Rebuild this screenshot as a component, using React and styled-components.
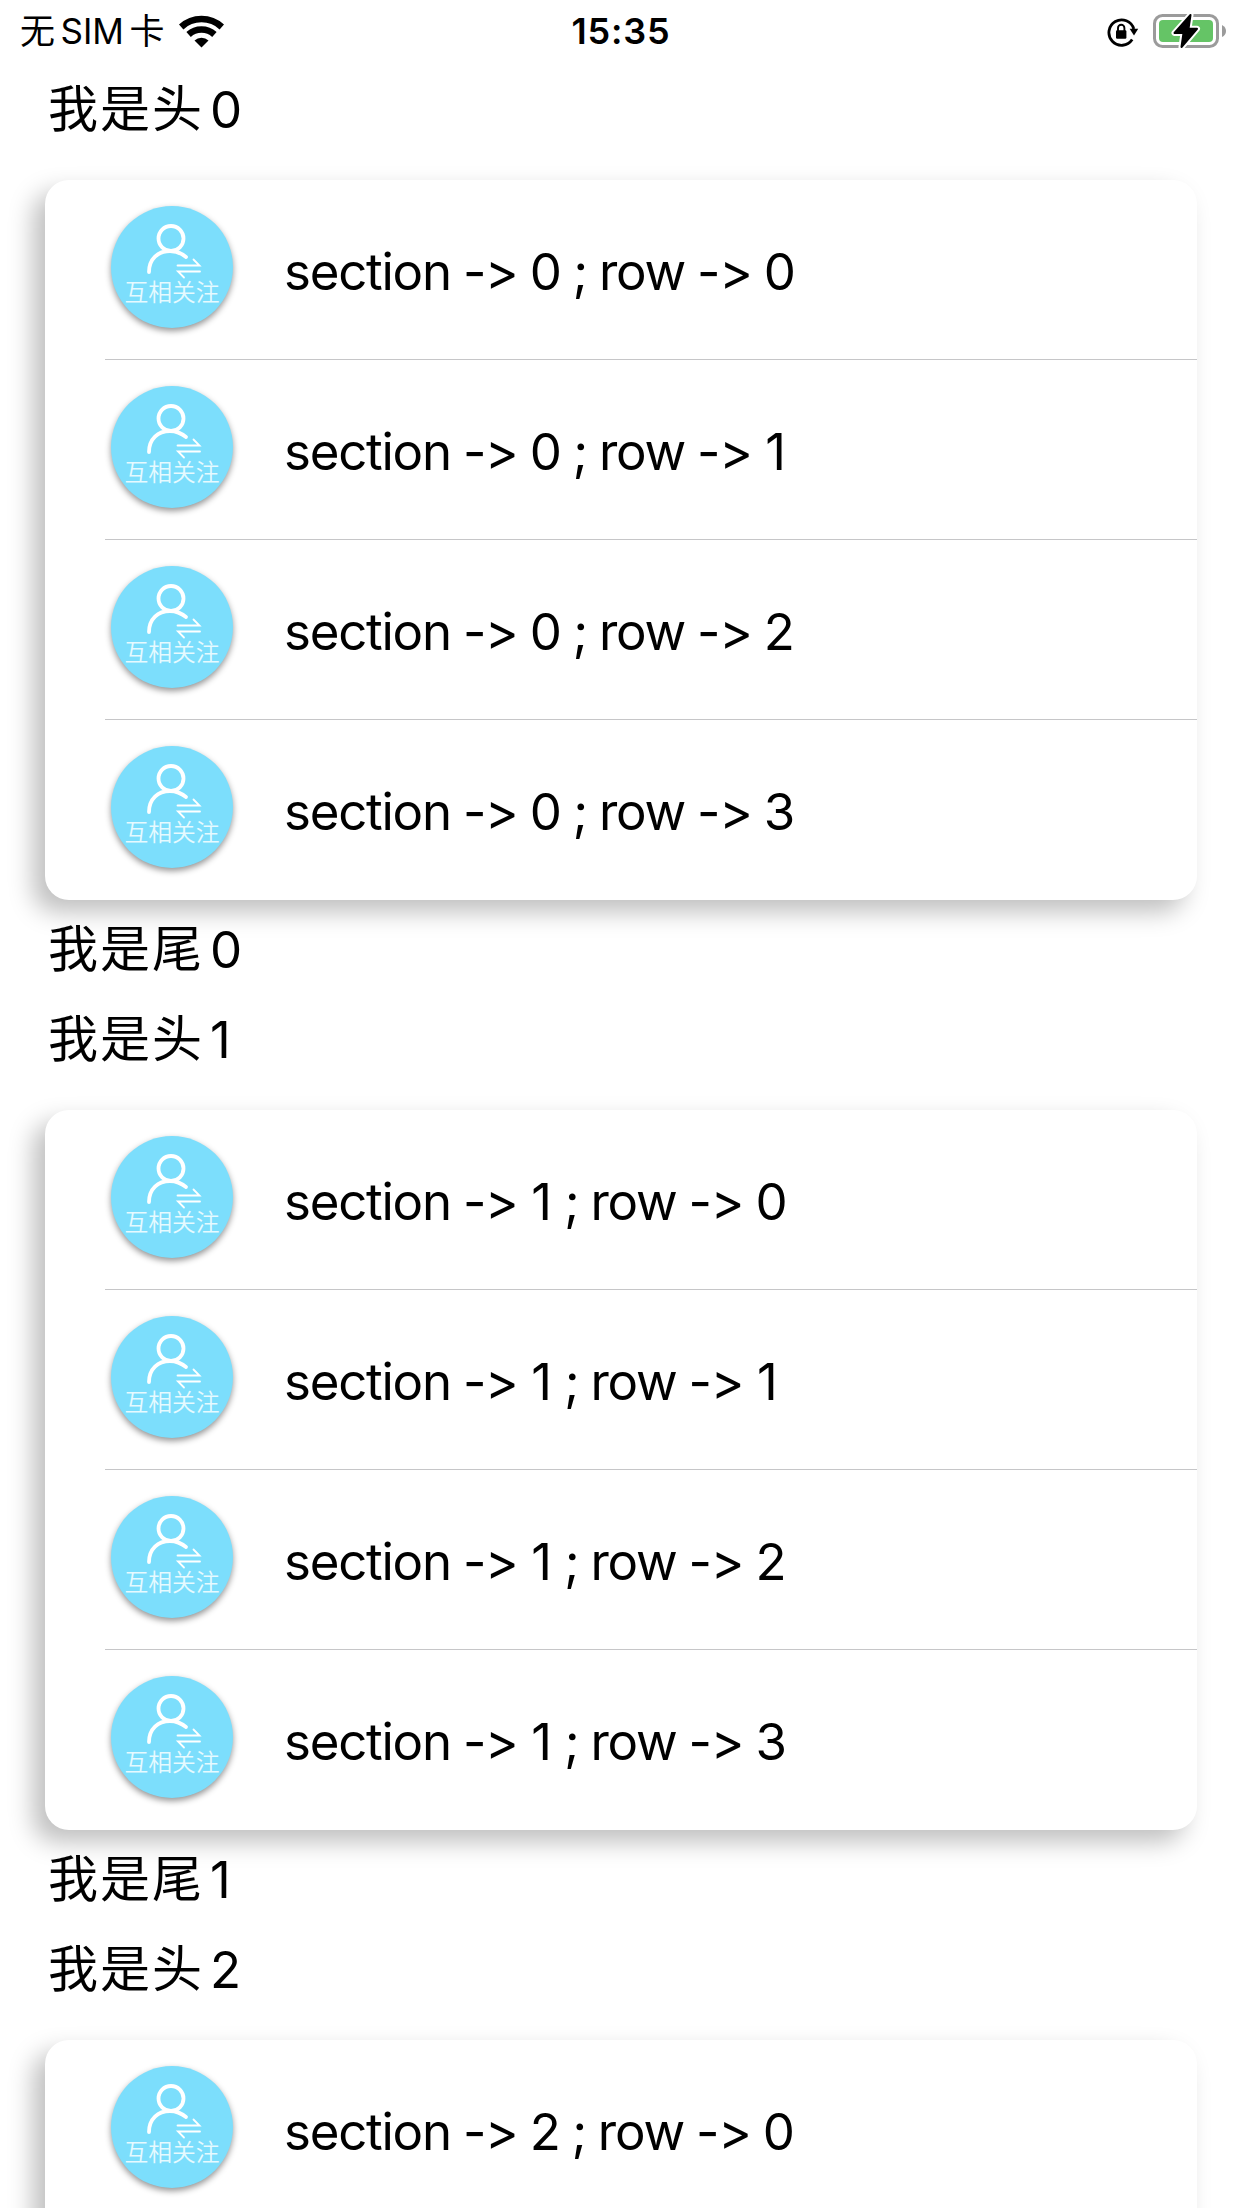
import React from "react";
import styled, { createGlobalStyle } from "styled-components";

const GlobalStyle = createGlobalStyle`
  * { box-sizing: border-box; }
  html, body { margin: 0; padding: 0; background: #fff; }
  body {
    height: 2208px;
    overflow: hidden;
    font-family: Inter, "Noto Sans CJK SC", sans-serif;
    color: #000;
    font-feature-settings: "calt" 0;
  }
`;

const Screen = styled.main`
  width: 1242px;
  height: 2208px;
  overflow: hidden;
  display: flex;
  flex-direction: column;
  background: #fff;
`;

const StatusBar = styled.header`
  flex: none;
  height: 60px;
  padding: 0 15px 0 20px;
  display: grid;
  grid-template-columns: 1fr auto 1fr;
  align-items: center;
`;

const Carrier = styled.div`
  display: flex;
  align-items: center;
  gap: 13px;
  font-size: 35px;
  line-height: 62px;
  white-space: nowrap;
`;

const CarrierName = styled.span`
  display: flex;
  gap: 5.5px;
`;

const Clock = styled.time`
  margin-right: 5px;
  font-size: 36px;
  font-weight: 600;
  letter-spacing: 0.8px;
  line-height: 62px;
`;

const Indicators = styled.div`
  display: flex;
  justify-content: flex-end;
  align-items: center;
  gap: 14px;
`;

const Icon = styled.svg`
  display: block;
  flex: none;
`;

const Caption = styled.div`
  flex: none;
  height: ${(p) => (p.$kind === "header" ? 120 : 90)}px;
  padding-left: 48px;
  display: flex;
  gap: 6px;
  font-size: 51px;
  line-height: 99px;
  white-space: nowrap;
`;

const CaptionLabel = styled.span`
  font-size: 50px;
  letter-spacing: 2px;
`;

const Card = styled.section`
  flex: none;
  min-height: 720px;
  margin: 0 45px;
  border-radius: 24px;
  background: #fff;
  box-shadow: -12px 12px 24px rgba(0, 0, 0, 0.25);
`;

const Row = styled.div`
  height: 180px;
  margin-left: 60px;
  padding: 26px 0 0 6px;
  display: flex;
  border-bottom: 1px solid ${(p) => (p.$last ? "transparent" : "#c6c6c8")};
`;

const Avatar = styled.div`
  flex: none;
  width: 122px;
  height: 122px;
  border-radius: 50%;
  background: #7cdefc;
  box-shadow: 0 3px 6px rgba(0, 0, 0, 0.42);
  display: flex;
  flex-direction: column;
  align-items: center;
`;

const AvatarText = styled.span`
  margin-top: -4px;
  font-family: "Noto Sans CJK SC", sans-serif;
  font-weight: 350;
  font-size: 23.8px;
  line-height: 26px;
  color: #e6faff;
  white-space: nowrap;
`;

const RowText = styled.span`
  margin-left: 51px;
  font-size: 51px;
  line-height: 131px;
  letter-spacing: -1.25px;
  word-spacing: -1px;
  white-space: nowrap;
`;

const Digit = styled.span`
  padding: 0 ${(p) => (p.$value === 1 ? 1.5 : 0)}px;
`;

const WifiIcon = () => (
  <Icon width="47" height="34" viewBox="0 0 47 34">
    <path d="M3.2 13 A30 30 0 0 1 43.8 13" fill="none" stroke="#000" strokeWidth="6.5" />
    <path d="M10.6 20.5 A19 19 0 0 1 36.4 20.5" fill="none" stroke="#000" strokeWidth="6.5" />
    <path d="M16.5 26.5 A10.2 10.2 0 0 1 30.5 26.5 L23.5 33.5 Z" />
  </Icon>
);

const RotationLockIcon = () => (
  <Icon width="32" height="32" viewBox="0 0 32 32">
    <path d="M25.2 24.6 A12.7 12.7 0 1 1 26.8 14" fill="none" stroke="#000" strokeWidth="2.8" />
    <path d="M22.6 13.8 H31.2 L27 20.6 Z" />
    <rect x="9" y="15.3" width="10.4" height="8.4" rx="1.2" />
    <path d="M11 16 V13 a3.2 3.2 0 0 1 6.4 0 V16" fill="none" stroke="#000" strokeWidth="1.9" />
  </Icon>
);

const BatteryIcon = () => (
  <Icon width="74" height="36" viewBox="0 0 74 36">
    <rect x="1.5" y="2.5" width="63" height="31" rx="8" fill="#fff" stroke="#9b9b9b" strokeWidth="3" />
    <rect x="6" y="7" width="54" height="22" rx="4" fill="#65c466" />
    <path d="M69 12 Q73 14 73 18 Q73 22 69 24 Z" fill="#9b9b9b" />
    <path d="M37.5 2 L21.5 20 H30.5 L28.5 34 L44 15.8 H35.5 Z" stroke="#fff" strokeWidth="6" strokeLinejoin="round" />
    <path d="M37.5 2 L21.5 20 H30.5 L28.5 34 L44 15.8 H35.5 Z" stroke="#000" strokeWidth="2" strokeLinejoin="round" />
  </Icon>
);

const MutualFollowIcon = () => (
  <Icon width="122" height="76" viewBox="0 0 122 76" fill="none" stroke="#fff" strokeLinecap="round">
    <circle cx="60" cy="32.5" r="12.5" strokeWidth="3.8" />
    <path d="M38 66 C38 53 47 45 59 45 C65 45 70 47 75 51" strokeWidth="3.8" />
    <path d="M66.5 59.5 H88.5 L82.5 53.5" strokeWidth="1.8" />
    <path d="M89 65.5 H67 L73 71.5" strokeWidth="1.8" />
  </Icon>
);

const rows = [0, 1, 2, 3];

const Section = ({ index, rowCount = 4, footer = true }) => (
  <>
    <Caption $kind="header">
      <CaptionLabel>我是头</CaptionLabel>
      <span>{index}</span>
    </Caption>
    <Card>
      {rows.slice(0, rowCount).map((row) => (
        <Row key={row} $last={row === 3}>
          <Avatar>
            <MutualFollowIcon />
            <AvatarText>互相关注</AvatarText>
          </Avatar>
          <RowText>
            {"section -> "}
            <Digit $value={index}>{index}</Digit>
            {" ; row -> "}
            <Digit $value={row}>{row}</Digit>
          </RowText>
        </Row>
      ))}
    </Card>
    {footer && (
      <Caption $kind="footer">
        <CaptionLabel>我是尾</CaptionLabel>
        <span>{index}</span>
      </Caption>
    )}
  </>
);

export default function App() {
  return (
    <>
      <GlobalStyle />
      <Screen>
        <StatusBar>
          <Carrier>
            <CarrierName>
              <span>无</span>
              <span>SIM</span>
              <span>卡</span>
            </CarrierName>
            <WifiIcon />
          </Carrier>
          <Clock>15:35</Clock>
          <Indicators>
            <RotationLockIcon />
            <BatteryIcon />
          </Indicators>
        </StatusBar>
        <Section index={0} />
        <Section index={1} />
        <Section index={2} rowCount={1} footer={false} />
      </Screen>
    </>
  );
}
